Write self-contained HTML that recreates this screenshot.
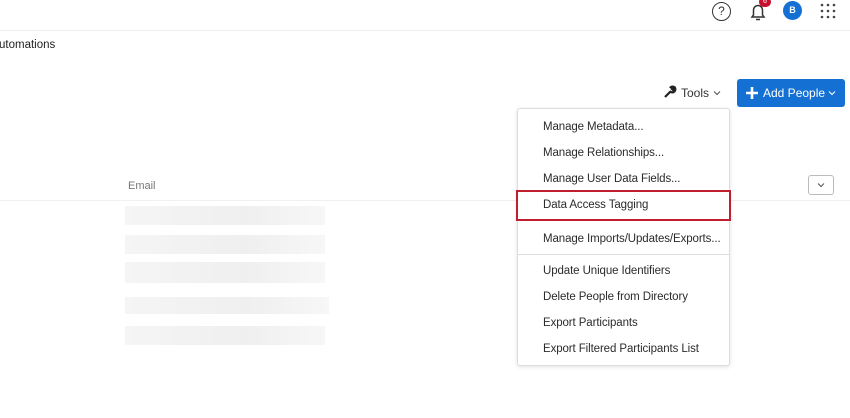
<!DOCTYPE html>
<html><head><style>
*{margin:0;padding:0;box-sizing:border-box}
body{width:850px;height:418px;background:#fff;font-family:"Liberation Sans",sans-serif;color:#1f1f1f;position:relative;overflow:hidden}
.a{position:absolute}
.bar{position:absolute;left:125px;width:200px;height:19px;background:linear-gradient(90deg,#f5f5f5,#efefef 60%,#f7f7f7)}
.it{position:absolute;left:543px;font-size:11.5px;color:#2b2b2b;line-height:14px;letter-spacing:-0.1px}
</style></head><body>
<div class="a" style="left:0;top:30px;width:850px;height:1px;background:#eee"></div>
<div class="a" style="left:712px;top:2px;width:19px;height:19px;border:1.5px solid #333;border-radius:50%;font-size:12px;text-align:center;line-height:16px;color:#333">?</div>
<svg class="a" style="left:748px;top:2px" width="20" height="20" viewBox="0 0 20 20"><path d="M4 15h12l-1.5-2V8a4.5 4.5 0 0 0-9 0v5z M8 17.5h4" fill="none" stroke="#333" stroke-width="1.5"/></svg>
<div class="a" style="left:759px;top:-3px;width:12px;height:10px;background:#c8102e;border-radius:5px;color:#fff;font-size:7px;text-align:center;line-height:10px">6</div>
<div class="a" style="left:783px;top:1px;width:19px;height:19px;background:#1570d3;border-radius:50%;color:#fff;font-size:9px;font-weight:bold;text-align:center;line-height:19px">B</div>
<svg class="a" style="left:820px;top:3px" width="16" height="16"><g fill="#444"><circle cx="2" cy="2" r="1.3"/><circle cx="8" cy="2" r="1.3"/><circle cx="14" cy="2" r="1.3"/><circle cx="2" cy="8" r="1.3"/><circle cx="8" cy="8" r="1.3"/><circle cx="14" cy="8" r="1.3"/><circle cx="2" cy="14" r="1.3"/><circle cx="8" cy="14" r="1.3"/><circle cx="14" cy="14" r="1.3"/></g></svg>
<div class="a" style="left:-1px;top:39px;font-size:11.5px">utomations</div>
<svg class="a" style="left:663px;top:85px" width="14" height="14" viewBox="0 0 14 14"><path d="M2 12l6-6M7 3a3 3 0 0 1 4-1l-2 2 1 1 2-2a3 3 0 0 1-4 4" fill="none" stroke="#222" stroke-width="2.2"/></svg>
<div class="a" style="left:681px;top:86px;font-size:12px;color:#333">Tools</div>
<svg class="a" style="left:713px;top:90px" width="8" height="6"><path d="M1 1.5l3 3 3-3" fill="none" stroke="#555" stroke-width="1.1"/></svg>
<div class="a" style="left:737px;top:79px;width:108px;height:28px;background:#1570d3;border-radius:3px"></div>
<svg class="a" style="left:745px;top:86px" width="14" height="14"><path d="M7 1v12M1 7h12" stroke="#fff" stroke-width="2.6"/></svg>
<div class="a" style="left:763px;top:86px;color:#fff;font-size:12px">Add People</div>
<svg class="a" style="left:828px;top:90px" width="8" height="6"><path d="M1 1.5l3 3 3-3" fill="none" stroke="#fff" stroke-width="1.1"/></svg>
<div class="a" style="left:128px;top:180px;font-size:11px;color:#777">Email</div>
<div class="a" style="left:0;top:200px;width:850px;height:1px;background:#f0f0f0"></div>
<div class="a" style="left:808px;top:175px;width:26px;height:20px;border:1px solid #bbb;border-radius:3px"></div>
<svg class="a" style="left:817px;top:182px" width="8" height="6"><path d="M1 1.5l3 3 3-3" fill="none" stroke="#555" stroke-width="1"/></svg>
<div class="bar" style="top:206px"></div><div class="bar" style="top:235px"></div><div class="bar" style="top:262px;height:21px"></div><div class="bar" style="top:297px;height:17px;width:204px"></div><div class="bar" style="top:326px"></div>
<div class="a" style="left:517px;top:108px;width:213px;height:258px;background:#fff;border:1px solid #ddd;border-radius:3px;box-shadow:0 1px 4px rgba(0,0,0,.12)"></div>
<div class="a" style="left:518px;top:254px;width:211px;height:1px;background:#ddd"></div>
<div class="a" style="left:516px;top:190px;width:215px;height:31px;border:2.5px solid #c01f2f"></div>
<div class="it" style="top:120px">Manage Metadata...</div>
<div class="it" style="top:146px">Manage Relationships...</div>
<div class="it" style="top:172px">Manage User Data Fields...</div>
<div class="it" style="top:198px">Data Access Tagging</div>
<div class="it" style="top:232px">Manage Imports/Updates/Exports...</div>
<div class="it" style="top:264px">Update Unique Identifiers</div>
<div class="it" style="top:290px">Delete People from Directory</div>
<div class="it" style="top:316px">Export Participants</div>
<div class="it" style="top:342px">Export Filtered Participants List</div>
</body></html>
